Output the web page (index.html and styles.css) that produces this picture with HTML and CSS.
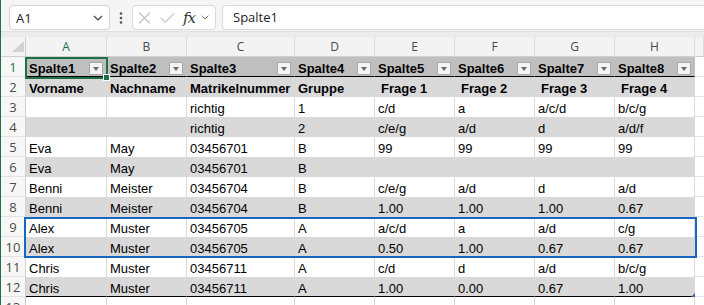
FILE: index.html
```html
<!DOCTYPE html>
<html lang="de">

<head>
    <meta charset="UTF-8">
    <meta name="viewport" content="width=device-width, initial-scale=1.0">
    <title>Mappe1 - Excel</title>
    <link rel="stylesheet" href="styles.css">
</head>

<body>
    <div class="app">
        <div class="toolbar">
            <div class="namebox">
                <span>A1</span>
                <svg class="chev" width="10" height="6" viewBox="0 0 10 6">
                    <path d="M1 1l4 4 4-4" fill="none" stroke="#444" stroke-width="1.2" />
                </svg>
            </div>
            <svg class="dots" width="4" height="12" viewBox="0 0 4 12">
                <circle cx="2" cy="1.5" r="1.3" />
                <circle cx="2" cy="6" r="1.3" />
                <circle cx="2" cy="10.5" r="1.3" />
            </svg>
            <div class="fxbox">
                <svg class="cancel" width="13" height="12" viewBox="0 0 13 12">
                    <path d="M1 0.5l11 11M12 0.5l-11 11" fill="none" stroke="#c2c2c2" stroke-width="1.1" />
                </svg>
                <svg class="enter" width="15" height="10" viewBox="0 0 15 10">
                    <path d="M0.8 4.8l4.4 4.4 9-8.8" fill="none" stroke="#c2c2c2" stroke-width="1.1" />
                </svg>
                <span class="fx">fx</span>
                <svg class="chev small" width="8" height="5" viewBox="0 0 8 5">
                    <path d="M0.7 0.7l3.3 3.3 3.3-3.3" fill="none" stroke="#777" stroke-width="1" />
                </svg>
            </div>
            <div class="formula">Spalte1</div>
        </div>
        <div class="band"></div>
        <div id="sheet" class="sheet"></div>
    </div>
    <script>
        const cols = ['A', 'B', 'C', 'D', 'E', 'F', 'G', 'H'];
        const data = [
            ['Spalte1', 'Spalte2', 'Spalte3', 'Spalte4', 'Spalte5', 'Spalte6', 'Spalte7', 'Spalte8'],
            ['Vorname', 'Nachname', 'Matrikelnummer', 'Gruppe', 'Frage 1', 'Frage 2', 'Frage 3', 'Frage 4'],
            ['', '', 'richtig', '1', 'c/d', 'a', 'a/c/d', 'b/c/g'],
            ['', '', 'richtig', '2', 'c/e/g', 'a/d', 'd', 'a/d/f'],
            ['Eva', 'May', '03456701', 'B', '99', '99', '99', '99'],
            ['Eva', 'May', '03456701', 'B', '', '', '', ''],
            ['Benni', 'Meister', '03456704', 'B', 'c/e/g', 'a/d', 'd', 'a/d'],
            ['Benni', 'Meister', '03456704', 'B', '1.00', '1.00', '1.00', '0.67'],
            ['Alex', 'Muster', '03456705', 'A', 'a/c/d', 'a', 'a/d', 'c/g'],
            ['Alex', 'Muster', '03456705', 'A', '0.50', '1.00', '0.67', '0.67'],
            ['Chris', 'Muster', '03456711', 'A', 'c/d', 'd', 'a/d', 'b/c/g'],
            ['Chris', 'Muster', '03456711', 'A', '1.00', '0.00', '0.67', '1.00']
        ];

        let html = '<div class="row colhead"><div class="corner"></div>' +
            cols.map(c => `<div class="cell${c === 'A' ? ' active' : ''}">${c}</div>`).join('') +
            '<div class="cell"></div></div>';

        data.forEach((r, i) => {
            let n = i + 1;
            let cls = 'row';
            if (n === 1) cls += ' head';
            else if (n % 2 === 0) cls += ' striped';
            if (n === 2) cls += ' bold';
            if (n === data.length) cls += ' last';
            html += `<div class="${cls}"><div class="num${n === 1 ? ' active' : ''}">${n}</div>` +
                r.map((v, j) => `<div class="cell${n === 2 && j > 3 ? ' indent' : ''}">${v}${n === 1 ? '<span class="filter"></span>' : ''}</div>`).join('') +
                '<div class="cell rest"></div></div>';
        });

        html += '<div class="row"><div class="num">13</div>' + cols.map(() => '<div class="cell"></div>').join('') + '<div class="cell rest"></div></div>';
        html += '<div class="selection"></div><div class="marked"></div><div class="resize"></div>';

        document.getElementById('sheet').innerHTML = html;
    </script>
</body>

</html>
```

FILE: styles.css
```css
body {
    margin: 0;
    overflow: hidden;
    font-family: "Liberation Sans", Arial, sans-serif;
    color: #000;
}

.app {
    width: 703px;
    height: 305px;
    border-left: 1px solid #1e7145;
    background: #f5f5f5;
    overflow: hidden;
}

.toolbar {
    display: flex;
    align-items: flex-start;
    height: 31px;
    padding: 5px 0 0 8px;
    box-sizing: border-box;
    font-family: "Open Sans", sans-serif;
    font-size: 13px;
    color: #242424;
}

.namebox {
    display: flex;
    align-items: center;
    justify-content: space-between;
    width: 101px;
    height: 25px;
    padding: 0 6px 0 6px;
    box-sizing: border-box;
    background: white;
    border: 1px solid #d4d4d4;
    border-radius: 4px;
    margin-right: 9px;
}

.dots {
    fill: #555;
    margin: 7px 9px 0 0;
}

.fxbox {
    display: flex;
    align-items: center;
    width: 84px;
    height: 25px;
    padding-left: 5px;
    box-sizing: border-box;
    background: white;
    border: 1px solid #dadada;
    border-radius: 4px;
    margin-right: 6px;
}

.enter {
    margin-left: 9px;
}

.fx {
    font-family: "DejaVu Serif", "Liberation Serif", serif;
    font-style: italic;
    font-size: 15px;
    color: #333;
    margin-left: 8px;
    letter-spacing: -1px;
}

.chev.small {
    margin-left: 6px;
}

.formula {
    flex: 1;
    height: 25px;
    line-height: 23px;
    padding-left: 10px;
    box-sizing: border-box;
    background: white;
    border: 1px solid #dadada;
    border-right: none;
    border-radius: 4px 0 0 4px;
}

.band {
    height: 6px;
    background: #ebebeb;
    border-top: 1px solid #e0e0e0;
    box-sizing: border-box;
}

.sheet {
    position: relative;
    background: white;
}

.row {
    display: grid;
    grid-template-columns: 25px 81px 80px 108px 80px 80px 80px 80px 80px 1fr;
    height: 20px;
    font-size: 13px;
}

.cell {
    position: relative;
    height: 20px;
    padding: 3px 0 0 3px;
    line-height: 17px;
    box-sizing: border-box;
    border-right: 1px solid #dadada;
    white-space: nowrap;
    overflow: hidden;
}

.num {
    height: 20px;
    line-height: 20px;
    text-align: center;
    font-family: "Open Sans", sans-serif;
    font-size: 13px;
    color: #4a4a4a;
    background: #f7f7f7;
    border-right: 1px solid #cfcfcf;
    border-bottom: 1px solid #e3e3e3;
    box-sizing: border-box;
}

.active {
    color: #1e7145;
}

.colhead {
    background: #f3f3f3;
}

.colhead .cell {
    padding: 0;
    line-height: 20px;
    text-align: center;
    font-family: "Open Sans", sans-serif;
    font-size: 12px;
    color: #4a4a4a;
    border-right: 1px solid #dcdcdc;
    border-bottom: 1px solid #cfcfcf;
}

.colhead .active {
    color: #1e7145;
}

.corner {
    position: relative;
    border-right: 1px solid #cfcfcf;
    border-bottom: 1px solid #cfcfcf;
}

.corner::after {
    content: "";
    position: absolute;
    right: 1px;
    bottom: 4px;
    border-left: 12px solid transparent;
    border-bottom: 11px solid #d2d2d2;
}

.head .cell {
    font-weight: bold;
    background: #bfbfbf;
    border-right-color: #bfbfbf;
    border-bottom: 1px solid #000;
}

.bold .cell {
    font-weight: bold;
}

.striped .cell {
    background: #d9d9d9;
    border-right-color: #d9d9d9;
}

.last .cell {
    border-bottom: 1px solid #000;
}

.row .rest {
    background: white;
    border-right: none;
    border-bottom: 1px solid #e3e3e3;
}

.indent {
    padding-left: 6px;
}

.filter {
    position: absolute;
    right: 3px;
    top: 5px;
    width: 14px;
    height: 13px;
    box-sizing: border-box;
    background: #f4f4f4;
    border: 1px solid #a8a8a8;
}

.filter::after {
    content: "";
    position: absolute;
    left: 3px;
    top: 4px;
    border-left: 3.5px solid transparent;
    border-right: 3.5px solid transparent;
    border-top: 4px solid #6a6a6a;
}

.selection {
    position: absolute;
    left: 24px;
    top: 20px;
    width: 83px;
    height: 22px;
    box-sizing: border-box;
    border: 2px solid #1e7145;
}

.selection::after {
    content: "";
    position: absolute;
    right: -4px;
    bottom: -4px;
    width: 5px;
    height: 5px;
    background: #1e7145;
    border: 1px solid white;
}

.marked {
    position: absolute;
    left: 23px;
    top: 180px;
    width: 673px;
    height: 41px;
    box-sizing: border-box;
    border: 2px solid #1767c0;
}

.resize {
    position: absolute;
    left: 690px;
    top: 256px;
    border-left: 4px solid transparent;
    border-bottom: 4px solid #3a63b8;
}
```
